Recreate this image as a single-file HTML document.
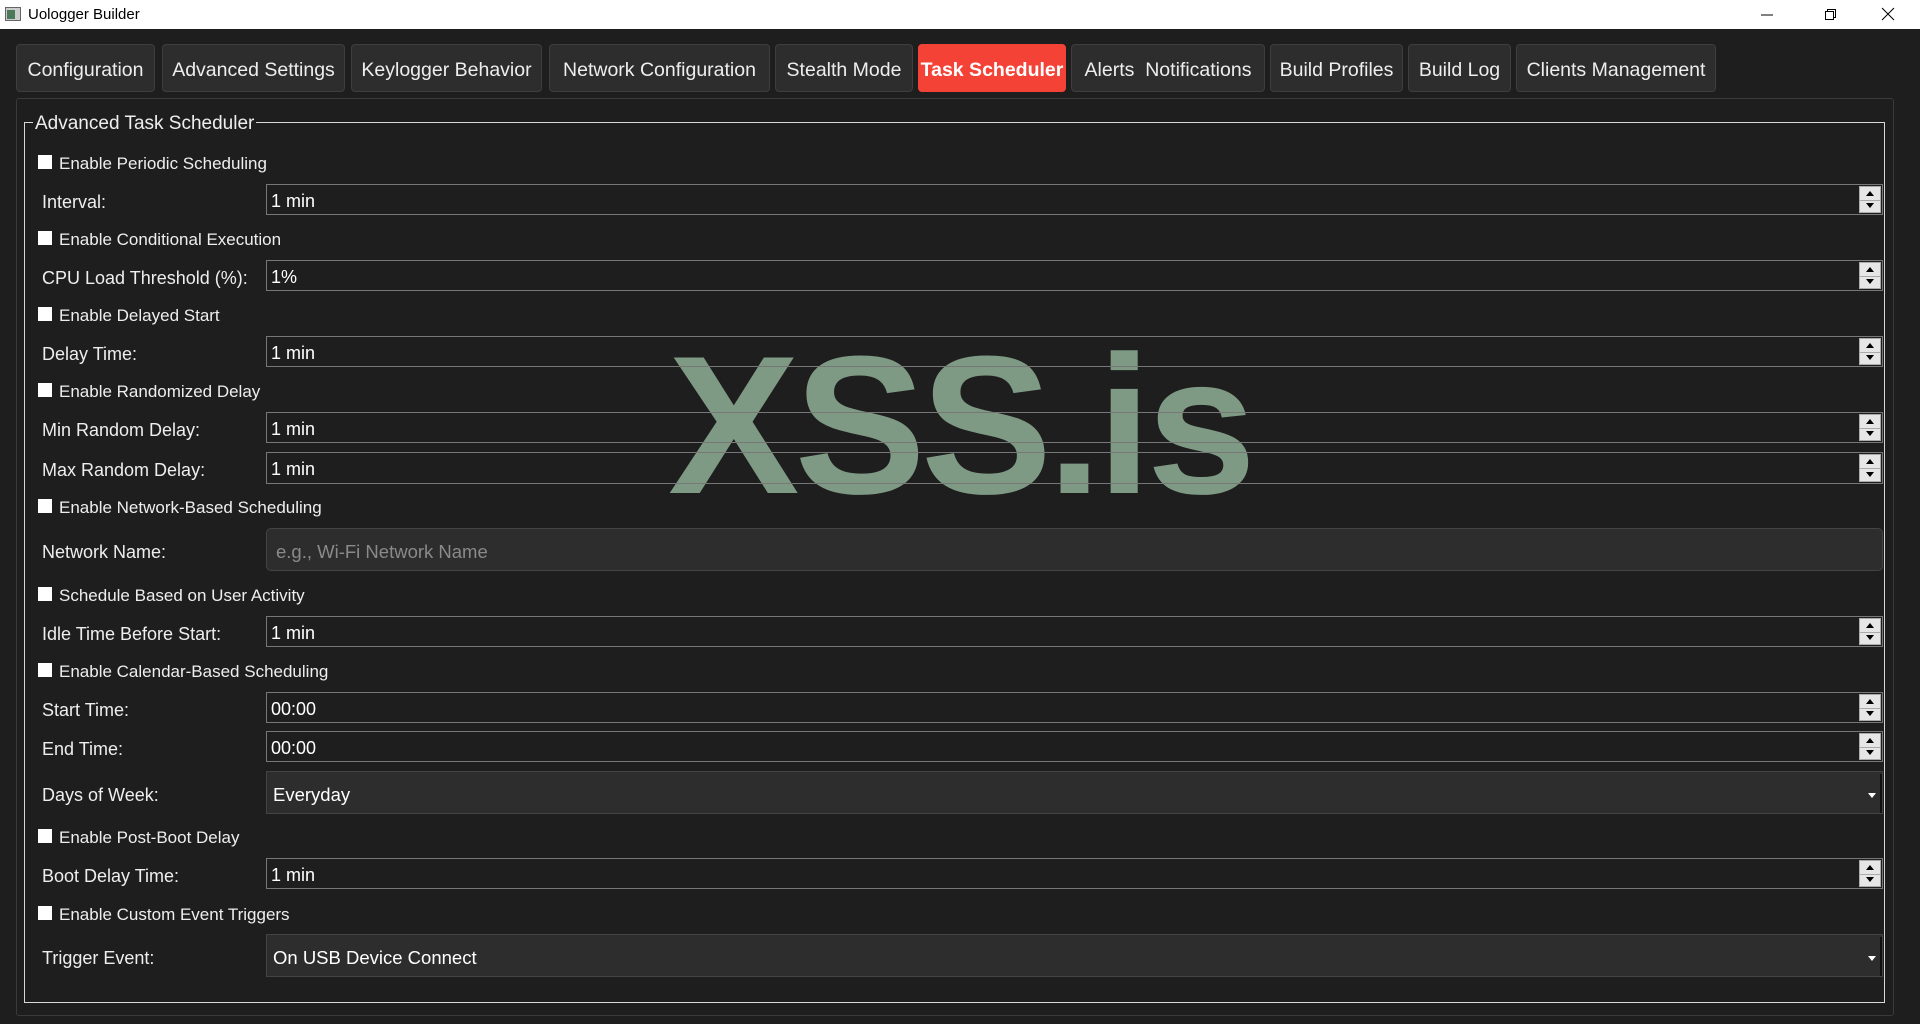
<!DOCTYPE html>
<html><head><meta charset="utf-8"><style>
*{box-sizing:border-box;margin:0;padding:0}
body{width:1920px;height:1024px;background:#1e1e1e;font-family:"Liberation Sans",sans-serif;position:relative;overflow:hidden;color:#fff}
.title{position:absolute;left:0;top:0;width:1920px;height:29px;background:#fff;color:#000;font-size:15px}
.title .t{position:absolute;left:28px;top:6px}
.tab{position:absolute;top:44px;height:48px;padding-top:4px;background:#2d2d2d;border:1px solid #3e3e3e;border-radius:4px;font-size:19.5px;color:#eee;display:flex;align-items:center;justify-content:center;white-space:nowrap;overflow:hidden}
.tab.a{background:#f44336;border-color:#f44336;font-weight:bold;color:#fff}
.pane{position:absolute;left:16px;top:98px;width:1878px;height:918px;border:1px solid #3a3a3a;border-radius:3px}
.grp{position:absolute;left:24px;top:122px;width:1861px;height:881px;border:1px solid #d8d8d8}
.gt{position:absolute;left:33px;top:113px;background:#1e1e1e;padding:0 2px;font-size:19px;color:#eee}
.wm{position:absolute;left:668px;top:327px;font-size:197px;font-weight:bold;color:#7f9a84;letter-spacing:-5px;line-height:1}
.cb{position:absolute;left:38px;width:14px;height:14px;background:#fff}
.cl{position:absolute;left:59px;font-size:17px;color:#eee;line-height:20px;margin-top:2px}
.lb{position:absolute;left:42px;font-size:18px;color:#eee;line-height:22px;margin-top:2px}
.in{position:absolute;left:266px;width:1617px;border:1px solid #777;font-size:18px;color:#fff;padding-left:4px;padding-top:3px;display:flex;align-items:center}
.sp{position:absolute;right:1px;top:1px;bottom:1px;width:22px;background:#e6e6e6;border:1px solid #aaa}
.sp:before{content:"";position:absolute;left:6px;top:4px;border:4px solid transparent;border-bottom:5px solid #000;border-top:0}
.sp:after{content:"";position:absolute;left:6px;bottom:4px;border:4px solid transparent;border-top:5px solid #000;border-bottom:0}
.sp i{position:absolute;left:0;right:0;top:50%;border-top:1px solid #aaa}
.cmb{position:absolute;left:266px;width:1617px;background:#2d2d2d;border:1px solid #444;font-size:18.5px;color:#fff;padding-left:6px;padding-top:4px;display:flex;align-items:center}
.cmb.dd:after{content:"";position:absolute;right:6px;top:50%;border:4px solid transparent;border-top:5px solid #fff}
.cmb b{position:absolute;right:0;top:2px;bottom:0;width:3px;border-right:2px solid #111}
</style></head><body>
<div class="title"><svg style="position:absolute;left:5px;top:7px" width="16" height="14"><rect x="0.5" y="0.5" width="15" height="13" fill="#ccc" stroke="#666"/><rect x="2" y="3" width="8" height="9" fill="#4a7a5a"/></svg><span class="t">Uologger Builder</span>
<svg style="position:absolute;left:1760px;top:8px" width="14" height="14"><path d="M1 7H13" stroke="#000"/></svg>
<svg style="position:absolute;left:1822px;top:6px" width="16" height="16"><path d="M3.5 5.5h8v8h-8zM5.5 5.5v-2h8v8h-2" fill="none" stroke="#000"/></svg>
<svg style="position:absolute;left:1880px;top:6px" width="16" height="16"><path d="M2 2L14 14M14 2L2 14" stroke="#000"/></svg></div>
<div class="pane"></div>
<div class="tab" style="left:16px;width:139px">Configuration</div>
<div class="tab" style="left:162px;width:183px">Advanced Settings</div>
<div class="tab" style="left:351px;width:191px">Keylogger Behavior</div>
<div class="tab" style="left:549px;width:221px">Network Configuration</div>
<div class="tab" style="left:775px;width:138px">Stealth Mode</div>
<div class="tab a" style="left:918px;width:148px">Task Scheduler</div>
<div class="tab" style="left:1071px;width:194px">Alerts&nbsp; Notifications</div>
<div class="tab" style="left:1270px;width:133px">Build Profiles</div>
<div class="tab" style="left:1408px;width:103px">Build Log</div>
<div class="tab" style="left:1516px;width:200px">Clients Management</div>
<div class="grp"></div>
<div class="wm">XSS.is</div>
<div class="gt">Advanced Task Scheduler</div>

<div class="cb" style="top:155px"></div><div class="cl" style="top:152px">Enable Periodic Scheduling</div>
<div class="lb" style="top:189px">Interval:</div>
<div class="in" style="top:184px;height:31px">1 min<div class="sp"><i></i></div></div>

<div class="cb" style="top:231px"></div><div class="cl" style="top:228px">Enable Conditional Execution</div>
<div class="lb" style="top:265px">CPU Load Threshold (%):</div>
<div class="in" style="top:260px;height:31px">1%<div class="sp"><i></i></div></div>

<div class="cb" style="top:307px"></div><div class="cl" style="top:304px">Enable Delayed Start</div>
<div class="lb" style="top:341px">Delay Time:</div>
<div class="in" style="top:336px;height:31px">1 min<div class="sp"><i></i></div></div>

<div class="cb" style="top:383px"></div><div class="cl" style="top:380px">Enable Randomized Delay</div>
<div class="lb" style="top:417px">Min Random Delay:</div>
<div class="in" style="top:412px;height:31px">1 min<div class="sp"><i></i></div></div>
<div class="lb" style="top:457px">Max Random Delay:</div>
<div class="in" style="top:452px;height:32px">1 min<div class="sp"><i></i></div></div>

<div class="cb" style="top:499px"></div><div class="cl" style="top:496px">Enable Network-Based Scheduling</div>
<div class="lb" style="top:539px">Network Name:</div>
<div class="cmb" style="top:528px;height:43px;border-radius:5px;color:#8a8a8a;padding-left:9px">e.g., Wi-Fi Network Name</div>

<div class="cb" style="top:587px"></div><div class="cl" style="top:584px">Schedule Based on User Activity</div>
<div class="lb" style="top:621px">Idle Time Before Start:</div>
<div class="in" style="top:616px;height:31px">1 min<div class="sp"><i></i></div></div>

<div class="cb" style="top:663px"></div><div class="cl" style="top:660px">Enable Calendar-Based Scheduling</div>
<div class="lb" style="top:697px">Start Time:</div>
<div class="in" style="top:692px;height:31px">00:00<div class="sp"><i></i></div></div>
<div class="lb" style="top:736px">End Time:</div>
<div class="in" style="top:731px;height:31px">00:00<div class="sp"><i></i></div></div>
<div class="lb" style="top:782px">Days of Week:</div>
<div class="cmb dd" style="top:771px;height:43px">Everyday<b></b></div>

<div class="cb" style="top:829px"></div><div class="cl" style="top:826px">Enable Post-Boot Delay</div>
<div class="lb" style="top:863px">Boot Delay Time:</div>
<div class="in" style="top:858px;height:31px">1 min<div class="sp"><i></i></div></div>

<div class="cb" style="top:906px"></div><div class="cl" style="top:903px">Enable Custom Event Triggers</div>
<div class="lb" style="top:945px">Trigger Event:</div>
<div class="cmb dd" style="top:934px;height:43px">On USB Device Connect<b></b></div>
</body></html>
